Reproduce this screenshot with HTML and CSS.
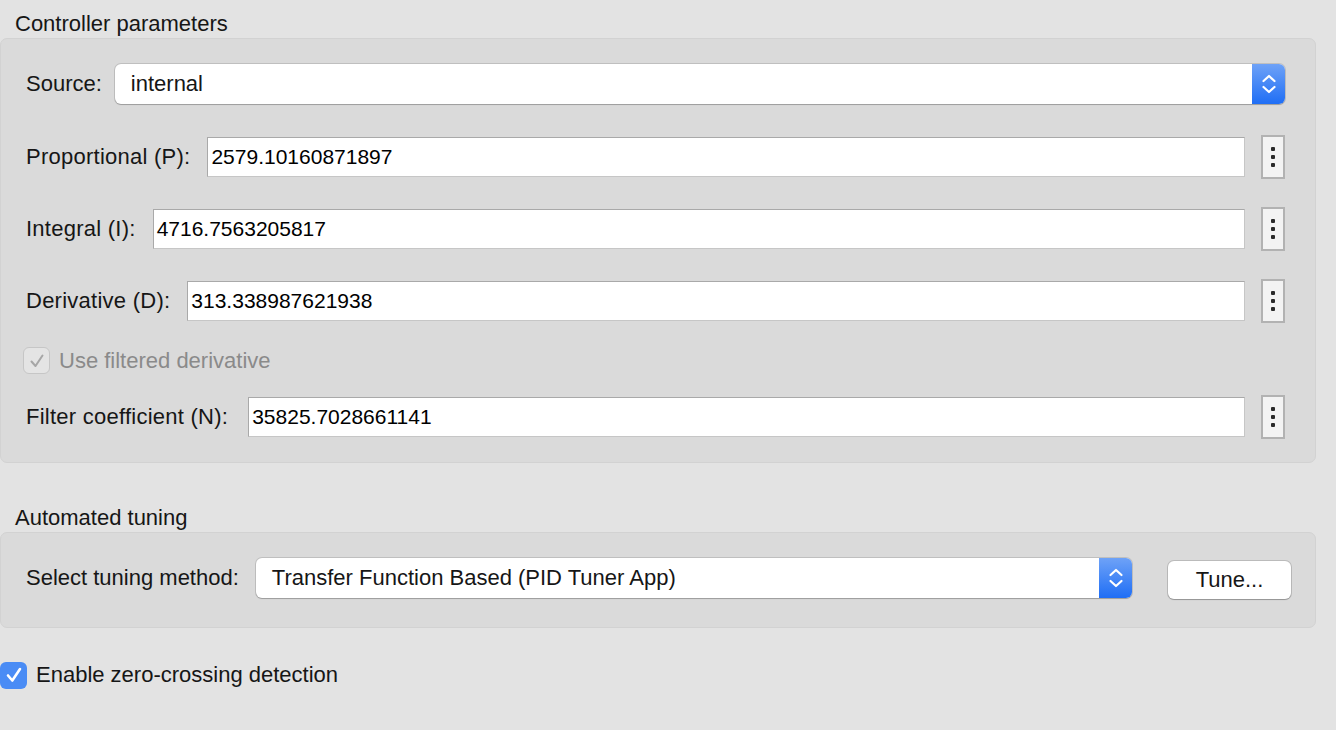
FILE: index.html
```html
<!DOCTYPE html>
<html>
<head>
<meta charset="utf-8">
<link rel="stylesheet" href="styles.css">
</head>
<body>
<div class="page">
  <div class="title first">Controller parameters</div>
  <div class="panel panel-main">
    <div class="row row-source">
      <span class="label label-source">Source:</span>
      <div class="select">
        <span class="select-text">internal</span>
        <span class="stepper">
          <svg width="16" height="24" viewBox="0 0 16 24"><path d="M2.5 9 L8 4 L13.5 9" fill="none" stroke="#fff" stroke-width="2.2" stroke-linecap="round" stroke-linejoin="round"/><path d="M2.5 15 L8 20 L13.5 15" fill="none" stroke="#fff" stroke-width="2.2" stroke-linecap="round" stroke-linejoin="round"/></svg>
        </span>
      </div>
    </div>
    <div class="row row-param first-param">
      <span class="label label-param">Proportional (P):</span>
      <div class="field">2579.10160871897</div>
      <div class="dots"><i></i><i></i><i></i></div>
    </div>
    <div class="row row-param">
      <span class="label label-param">Integral (I):</span>
      <div class="field">4716.7563205817</div>
      <div class="dots"><i></i><i></i><i></i></div>
    </div>
    <div class="row row-param">
      <span class="label label-param">Derivative (D):</span>
      <div class="field">313.338987621938</div>
      <div class="dots"><i></i><i></i><i></i></div>
    </div>
    <div class="row row-check">
      <span class="check disabled">
        <svg width="18" height="18" viewBox="0 0 18 18"><path d="M3.5 9.5 L7.5 14 L14.5 3.5" fill="none" stroke="#a6a6a6" stroke-width="2" stroke-linecap="round" stroke-linejoin="round"/></svg>
      </span>
      <span class="check-label disabled-text">Use filtered derivative</span>
    </div>
    <div class="row row-param row-filter">
      <span class="label label-param label-filter">Filter coefficient (N):</span>
      <div class="field">35825.7028661141</div>
      <div class="dots"><i></i><i></i><i></i></div>
    </div>
  </div>

  <div class="title second">Automated tuning</div>
  <div class="panel panel-tune">
    <div class="row row-tune">
      <span class="label">Select tuning method:</span>
      <div class="select">
        <span class="select-text">Transfer Function Based (PID Tuner App)</span>
        <span class="stepper">
          <svg width="16" height="24" viewBox="0 0 16 24"><path d="M2.5 9 L8 4 L13.5 9" fill="none" stroke="#fff" stroke-width="2.2" stroke-linecap="round" stroke-linejoin="round"/><path d="M2.5 15 L8 20 L13.5 15" fill="none" stroke="#fff" stroke-width="2.2" stroke-linecap="round" stroke-linejoin="round"/></svg>
        </span>
      </div>
      <div class="button">Tune...</div>
    </div>
  </div>

  <div class="zero-row">
    <span class="check checked">
      <svg width="20" height="20" viewBox="0 0 20 20"><path d="M4 10.5 L8.3 15.5 L16 4" fill="none" stroke="#fff" stroke-width="2.6" stroke-linecap="round" stroke-linejoin="round"/></svg>
    </span>
    <span class="check-label">Enable zero-crossing detection</span>
  </div>
</div>
</body>
</html>
```

FILE: styles.css
```css
html, body {
  margin: 0;
  padding: 0;
  background: #e3e3e3;
}
body {
  width: 1336px;
  height: 730px;
  overflow: hidden;
  font-family: "Liberation Sans", Arial, sans-serif;
  font-size: 22px;
  color: #161616;
}
.page {
  display: flex;
  flex-direction: column;
}
.title {
  padding-left: 15px;
  line-height: 28px;
  height: 28px;
}
.title.first {
  margin-top: 10px;
}
.title.second {
  margin-top: 41px;
}
.panel {
  background: #dadada;
  border: 1px solid #d2d2d2;
  border-radius: 7px;
  box-sizing: border-box;
}
.panel-main {
  width: 1316px;
  height: 425px;
  padding: 25px 30px 0 25px;
}
.row {
  display: flex;
  align-items: center;
}
.label {
  white-space: nowrap;
  margin-right: 17px;
}
.label-source {
  margin-right: 13px;
}
.label-param {
  letter-spacing: 0.25px;
}
.label-filter {
  margin-right: 20px;
}
.row-source {
  height: 40px;
}
.select {
  flex: 1;
  height: 40px;
  display: flex;
  align-items: center;
  background: #fff;
  border-radius: 6px;
  box-shadow: 0 0 0 1px rgba(0,0,0,0.12), 0 1px 1px rgba(0,0,0,0.18);
  overflow: hidden;
}
.select-text {
  flex: 1;
  padding-left: 16px;
  white-space: nowrap;
}
.stepper {
  width: 33px;
  height: 40px;
  display: flex;
  align-items: center;
  justify-content: center;
  background: linear-gradient(#6ea2f7, #1f6ef5);
}
.row-param {
  height: 44px;
  margin-top: 31px;
}
.row-param + .row-param {
  margin-top: 28px;
}
.field {
  flex: 1;
  height: 40px;
  box-sizing: border-box;
  background: #fff;
  border: 1px solid #a9a9a9;
  border-right-color: #c6c6c6;
  border-bottom-color: #c6c6c6;
  padding-left: 3px;
  line-height: 38px;
  margin-right: 16px;
  font-size: 21px;
  color: #000;
}
.dots {
  width: 24px;
  height: 44px;
  box-sizing: border-box;
  border: 2px solid #b2b2b2;
  background: #f3f3f3;
  display: flex;
  flex-direction: column;
  align-items: center;
  justify-content: center;
  gap: 4px;
}
.dots i {
  display: block;
  width: 4px;
  height: 4px;
  border-radius: 1px;
  background: #2a2a2a;
}
.row-check {
  height: 27px;
  margin-top: 24px;
  margin-left: -3px;
}
.check {
  width: 27px;
  height: 27px;
  box-sizing: border-box;
  border-radius: 6px;
  display: flex;
  align-items: center;
  justify-content: center;
  flex: none;
}
.check.disabled {
  background: #e4e4e4;
  border: 1px solid #c6c6c6;
}
.check-label {
  margin-left: 9px;
}
.disabled-text {
  color: #8a8a8a;
}
.row-param.row-filter {
  margin-top: 21px;
}
.panel-tune {
  width: 1316px;
  height: 96px;
  padding: 25px 24px 0 25px;
}
.row-tune {
  height: 40px;
}
.button {
  width: 123px;
  height: 38px;
  margin-left: 36px;
  background: #fff;
  border-radius: 6px;
  box-shadow: 0 0 0 1px rgba(0,0,0,0.14), 0 1px 1px rgba(0,0,0,0.2);
  display: flex;
  align-items: center;
  justify-content: center;
  margin-top: 4px;
  flex: none;
}
.zero-row {
  display: flex;
  align-items: center;
  margin-top: 33px;
  height: 28px;
}
.check.checked {
  background: #4a8cf5;
}
```
